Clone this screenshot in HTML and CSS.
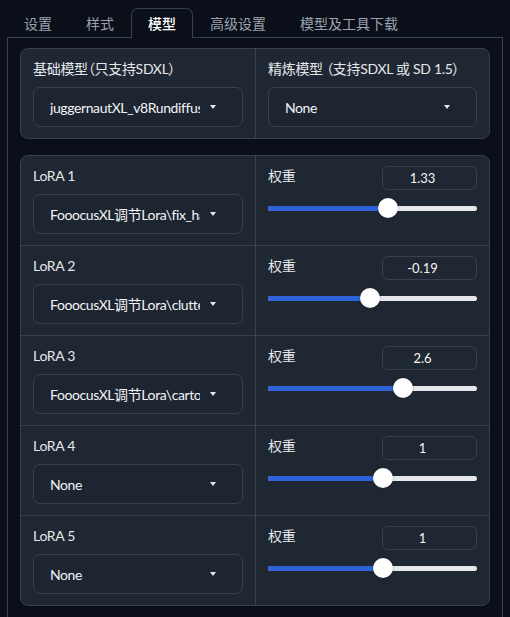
FILE: index.html
```html
<!DOCTYPE html>
<html lang="zh">
<head>
<meta charset="utf-8">
<title>Fooocus 模型</title>
<link rel="stylesheet" href="styles.css">
</head>
<body>
<div class="app">
  <div class="tabs">
    <div class="tab">设置</div>
    <div class="tab">样式</div>
    <div class="tab selected">模型</div>
    <div class="tab">高级设置</div>
    <div class="tab">模型及工具下载</div>
  </div>
  <div class="panel">
    <div class="card models">
      <div class="cell">
        <div class="label">基础模型（只支持SDXL）</div>
        <div class="dropdown"><span class="dd-text">juggernautXL_v8Rundiffusion.safetensors</span><span class="caret"></span></div>
      </div>
      <div class="cell divided">
        <div class="label">精炼模型 （支持SDXL 或 SD 1.5）</div>
        <div class="dropdown"><span class="dd-text">None</span><span class="caret"></span></div>
      </div>
    </div>

    <div class="card loras">
      <div class="row">
        <div class="cell">
          <div class="label">LoRA 1</div>
          <div class="dropdown"><span class="dd-text">FooocusXL调节Lora\fix_hands.safetensors</span><span class="caret"></span></div>
        </div>
        <div class="cell divided">
          <div class="weight-head"><span class="label">权重</span><span class="num">1.33</span></div>
          <div class="slider"><div class="track"><div class="fill" style="width:57.4%"></div></div><div class="thumb" style="left:57.4%"></div></div>
        </div>
      </div>
      <div class="row">
        <div class="cell">
          <div class="label">LoRA 2</div>
          <div class="dropdown"><span class="dd-text">FooocusXL调节Lora\clutter.safetensors</span><span class="caret"></span></div>
        </div>
        <div class="cell divided">
          <div class="weight-head"><span class="label">权重</span><span class="num">-0.19</span></div>
          <div class="slider"><div class="track"><div class="fill" style="width:48.8%"></div></div><div class="thumb" style="left:48.8%"></div></div>
        </div>
      </div>
      <div class="row">
        <div class="cell">
          <div class="label">LoRA 3</div>
          <div class="dropdown"><span class="dd-text">FooocusXL调节Lora\cartoon.safetensors</span><span class="caret"></span></div>
        </div>
        <div class="cell divided">
          <div class="weight-head"><span class="label">权重</span><span class="num">2.6</span></div>
          <div class="slider"><div class="track"><div class="fill" style="width:64.6%"></div></div><div class="thumb" style="left:64.6%"></div></div>
        </div>
      </div>
      <div class="row">
        <div class="cell">
          <div class="label">LoRA 4</div>
          <div class="dropdown"><span class="dd-text">None</span><span class="caret"></span></div>
        </div>
        <div class="cell divided">
          <div class="weight-head"><span class="label">权重</span><span class="num">1</span></div>
          <div class="slider"><div class="track"><div class="fill" style="width:55%"></div></div><div class="thumb" style="left:55%"></div></div>
        </div>
      </div>
      <div class="row">
        <div class="cell">
          <div class="label">LoRA 5</div>
          <div class="dropdown"><span class="dd-text">None</span><span class="caret"></span></div>
        </div>
        <div class="cell divided">
          <div class="weight-head"><span class="label">权重</span><span class="num">1</span></div>
          <div class="slider"><div class="track"><div class="fill" style="width:55%"></div></div><div class="thumb" style="left:55%"></div></div>
        </div>
      </div>
    </div>
  </div>
</div>
</body>
</html>
```
FILE: styles.css
```css
* { box-sizing: border-box; }
html, body {
  margin: 0;
  padding: 0;
  background: #0b0f19;
  color: #e5e7eb;
  font-family: "Lato", "Noto Sans CJK SC", sans-serif;
  font-size: 14px;
}
.app {
  padding: 8px 7px 0 7px;
}
.tabs {
  display: flex;
  height: 29px;
  font-family: "Noto Sans CJK SC", sans-serif;
}
.tab {
  padding: 0 16px;
  height: 29px;
  line-height: 28px;
  border: 1px solid transparent;
  border-bottom: none;
  color: #9ca3af;
  font-size: 14px;
  white-space: nowrap;
}
.tab.selected {
  position: relative;
  z-index: 1;
  height: 30px;
  border-color: #374151;
  border-radius: 7px 7px 0 0;
  background: #0b0f19;
  color: #ffffff;
  font-weight: 500;
}
.panel {
  border: 1px solid #374151;
  padding: 10px 12px 16px;
  display: flex;
  flex-direction: column;
  gap: 16px;
}
.card {
  background: #1f2733;
  border: 1px solid #374151;
  border-radius: 8px;
}
.models {
  display: grid;
  grid-template-columns: 1fr 1fr;
}
.loras {
  display: flex;
  flex-direction: column;
}
.row {
  display: grid;
  grid-template-columns: 1fr 1fr;
}
.row + .row {
  border-top: 1px solid #374151;
}
.cell {
  padding: 10px 12px 11px;
  min-width: 0;
}
.cell.divided {
  border-left: 1px solid #374151;
}
.label {
  line-height: 20px;
  font-size: 14px;
  letter-spacing: -0.3px;
  font-feature-settings: "palt";
  color: #e5e7eb;
  white-space: nowrap;
}
.cell > .label {
  margin-bottom: 8px;
}
.dropdown {
  height: 40px;
  display: flex;
  align-items: center;
  padding: 0 26px 0 16px;
  border: 1px solid #374151;
  border-radius: 7px;
  background: #1d2531;
}
.dd-text {
  flex: 1;
  min-width: 0;
  overflow: hidden;
  white-space: nowrap;
  color: #f3f4f6;
  font-size: 14px;
  letter-spacing: -0.4px;
}
.caret {
  margin-left: 10px;
  width: 0;
  height: 0;
  border-left: 3.5px solid transparent;
  border-right: 3.5px solid transparent;
  border-top: 4px solid #e5e7eb;
}
.weight-head {
  display: flex;
  justify-content: space-between;
  align-items: flex-start;
}
.num {
  width: 95px;
  height: 24px;
  line-height: 22px;
  border: 1px solid #374151;
  border-radius: 6px;
  padding-right: 14px;
  text-align: center;
  font-size: 13px;
  color: #f3f4f6;
  background: #1f2733;
}
.slider {
  position: relative;
  height: 20px;
  margin-top: 8px;
  display: flex;
  align-items: center;
}
.track {
  width: 100%;
  height: 5px;
  border-radius: 3px;
  background: #e5e7eb;
  overflow: hidden;
}
.fill {
  height: 100%;
  background: #2d62d8;
}
.thumb {
  position: absolute;
  top: 0;
  width: 20px;
  height: 20px;
  margin-left: -10px;
  border-radius: 50%;
  background: #ffffff;
  box-shadow: 0 0 2px rgba(0,0,0,0.4);
}
```
